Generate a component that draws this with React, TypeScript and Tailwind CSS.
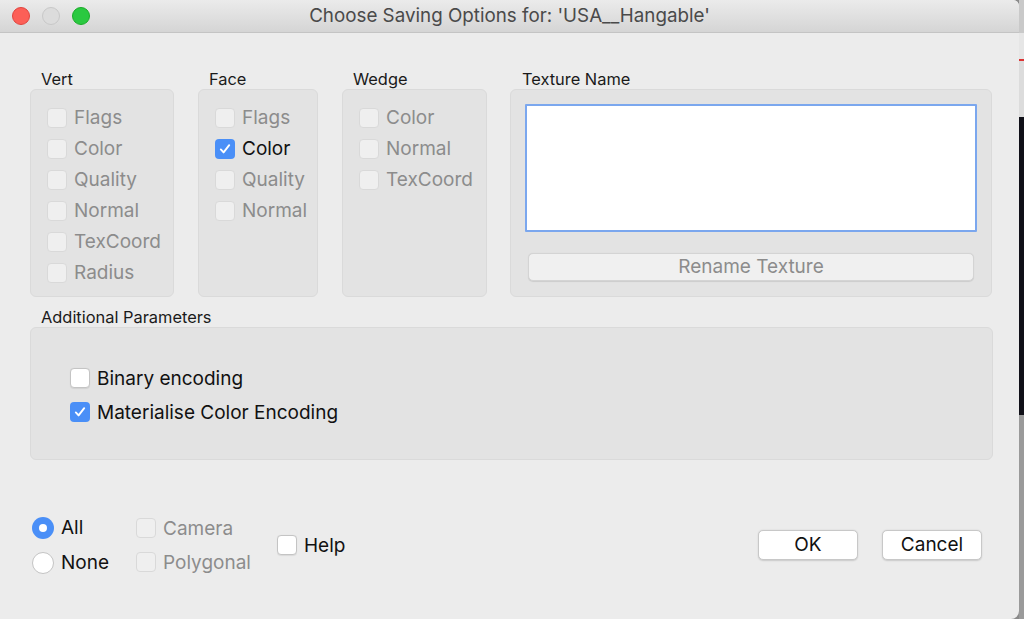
import React from "react";

const font = { fontFamily: "Inter, 'Liberation Sans', sans-serif" };

function Check({ checked = false, disabled = false }: { checked?: boolean; disabled?: boolean }) {
  if (checked) {
    return (
      <span className="flex h-[20px] w-[20px] shrink-0 items-center justify-center rounded-[4px] bg-[#4a8ff7]">
        <svg width="14" height="14" viewBox="0 0 14 14" fill="none">
          <path d="M2.8 7.4 L5.6 10.4 L11.2 3.2" stroke="white" strokeWidth="1.9" strokeLinecap="round" strokeLinejoin="round" />
        </svg>
      </span>
    );
  }
  return (
    <span
      className={
        disabled
          ? "h-[20px] w-[20px] shrink-0 rounded-[4px] border border-[#d9d9d9] bg-[#efefef]"
          : "h-[20px] w-[20px] shrink-0 rounded-[4px] border border-[#c4c4c4] bg-white shadow-[0_0.5px_1px_rgba(0,0,0,0.08)]"
      }
    />
  );
}

function CheckRow({ label, checked = false, disabled = true }: { label: string; checked?: boolean; disabled?: boolean }) {
  const color = disabled && !checked ? "text-[#8c8c8c]" : "text-[#111]";
  return (
    <div className="flex h-[31px] items-center gap-[7px]">
      <Check checked={checked} disabled={disabled && !checked} />
      <span className={`text-[19px] leading-none ${color}`}>{label}</span>
    </div>
  );
}

function Group({ title, width, items }: { title: string; width: string; items: { label: string; checked?: boolean }[] }) {
  return (
    <div className={`flex flex-col ${width}`}>
      <div className="h-[20px] pl-[11px] text-[16.4px] leading-[20px] text-[#1a1a1a]">{title}</div>
      <div className="h-[208px] rounded-[6px] border border-[#dadada] bg-[#e3e3e3] pl-[16px] pt-[2px]">
        <div className="mt-[10px] flex flex-col">
          {items.map((it) => (
            <CheckRow key={it.label} label={it.label} checked={it.checked} />
          ))}
        </div>
      </div>
    </div>
  );
}

export default function App() {
  return (
    <div className="flex h-[619px] w-[1024px] overflow-hidden bg-[#8a8a8a]" style={font}>
      <div className="flex h-[619px] w-[1019px] flex-col overflow-hidden rounded-br-[8px] rounded-tr-[6px] bg-[#ececec]">
        {/* Title bar */}
        <div className="relative flex h-[33px] shrink-0 items-center justify-center border-b border-[#c4c4c4] bg-gradient-to-b from-[#ebebeb] to-[#d5d5d5]">
          <div className="absolute left-[12px] top-[7px] flex gap-[12px]">
            <span className="h-[18px] w-[18px] rounded-full border border-[#e0443e] bg-[#fc5f57]" />
            <span className="h-[18px] w-[18px] rounded-full border border-[#c8c8c8] bg-[#dcdcdc]" />
            <span className="h-[18px] w-[18px] rounded-full border border-[#1aab29] bg-[#2ac940]" />
          </div>
          <span className="text-[18.8px] text-[#4a4a4a]">Choose Saving Options for: 'USA__Hangable'</span>
        </div>

        {/* Content */}
        <div className="flex flex-col pl-[30px] pt-[36px]">
          <div className="flex gap-[24px]">
            <Group
              title="Vert"
              width="w-[144px]"
              items={[
                { label: "Flags" },
                { label: "Color" },
                { label: "Quality" },
                { label: "Normal" },
                { label: "TexCoord" },
                { label: "Radius" },
              ]}
            />
            <Group
              title="Face"
              width="w-[120px]"
              items={[{ label: "Flags" }, { label: "Color", checked: true }, { label: "Quality" }, { label: "Normal" }]}
            />
            <div className="mr-[-1px]">
              <Group title="Wedge" width="w-[145px]" items={[{ label: "Color" }, { label: "Normal" }, { label: "TexCoord" }]} />
            </div>
            <div className="flex w-[482px] flex-col">
              <div className="h-[20px] pl-[12px] text-[16.4px] leading-[20px] text-[#1a1a1a]">Texture Name</div>
              <div className="flex h-[208px] flex-col rounded-[6px] border border-[#dadada] bg-[#e3e3e3] px-[14px] pt-[14px]">
                <div className="h-[128px] rounded-[1px] border-[2px] border-[#7ba7ee] bg-white" />
                <div className="mx-[3px] mt-[21px] flex h-[28px] items-center justify-center rounded-[5px] border border-[#d4d4d4] bg-[#f0f0f0] text-[19px] text-[#8c8c8c] shadow-[0_0.5px_1px_rgba(0,0,0,0.1)]">
                  Rename Texture
                </div>
              </div>
            </div>
          </div>

          <div className="mt-[10px] h-[20px] pl-[11px] text-[16.4px] leading-[20px] text-[#1a1a1a]">Additional Parameters</div>
          <div className="h-[133px] w-[963px] rounded-[6px] border border-[#dadada] bg-[#e3e3e3] pl-[39px] pt-[33px]">
            <div className="flex h-[34px] items-center gap-[7px]">
              <Check />
              <span className="text-[19px] leading-none text-[#111]">Binary encoding</span>
            </div>
            <div className="flex h-[34px] items-center gap-[7px]">
              <Check checked />
              <span className="text-[19px] leading-none text-[#111]">Materialise Color Encoding</span>
            </div>
          </div>
        </div>

        {/* Bottom row */}
        <div className="mt-[50px] flex items-center pl-[32px]">
          <div className="flex w-[104px] flex-col">
            <div className="flex h-[35px] items-center gap-[7px]">
              <span className="flex h-[22px] w-[22px] items-center justify-center rounded-full bg-[#4a8ff7]">
                <span className="h-[8px] w-[8px] rounded-full bg-white" />
              </span>
              <span className="text-[19px] leading-none text-[#111]">All</span>
            </div>
            <div className="flex h-[35px] items-center gap-[7px]">
              <span className="h-[22px] w-[22px] rounded-full border border-[#c4c4c4] bg-white" />
              <span className="text-[19px] leading-none text-[#111]">None</span>
            </div>
          </div>
          <div className="flex w-[141px] flex-col">
            <div className="flex h-[34px] items-center gap-[7px]">
              <Check disabled />
              <span className="text-[19px] leading-none text-[#8c8c8c]">Camera</span>
            </div>
            <div className="flex h-[34px] items-center gap-[7px]">
              <Check disabled />
              <span className="text-[19px] leading-none text-[#8c8c8c]">Polygonal</span>
            </div>
          </div>
          <div className="flex items-center gap-[7px]">
            <Check />
            <span className="text-[19px] leading-none text-[#111]">Help</span>
          </div>
          <div className="ml-auto mr-[37px] flex gap-[24px]">
            <div className="flex h-[30px] w-[100px] items-center justify-center rounded-[5px] border border-[#c8c8c8] bg-white text-[19px] text-[#111] shadow-[0_0.5px_1.5px_rgba(0,0,0,0.15)]">
              OK
            </div>
            <div className="flex h-[30px] w-[100px] items-center justify-center rounded-[5px] border border-[#c8c8c8] bg-white text-[19px] text-[#111] shadow-[0_0.5px_1.5px_rgba(0,0,0,0.15)]">
              Cancel
            </div>
          </div>
        </div>
      </div>
      {/* Background strip at right edge */}
      <div className="flex h-[619px] w-[5px] flex-col">
        <div className="h-[33px] bg-[#c9c9c9]" />
        <div className="h-[26px] bg-[#e6e6e6]" />
        <div className="h-[2px] bg-[#d33]" />
        <div className="h-[56px] bg-[#dcdcdc]" />
        <div className="h-[298px] bg-[#101018]" />
        <div className="flex-1 bg-[#9a9a9a]" />
      </div>
    </div>
  );
}
